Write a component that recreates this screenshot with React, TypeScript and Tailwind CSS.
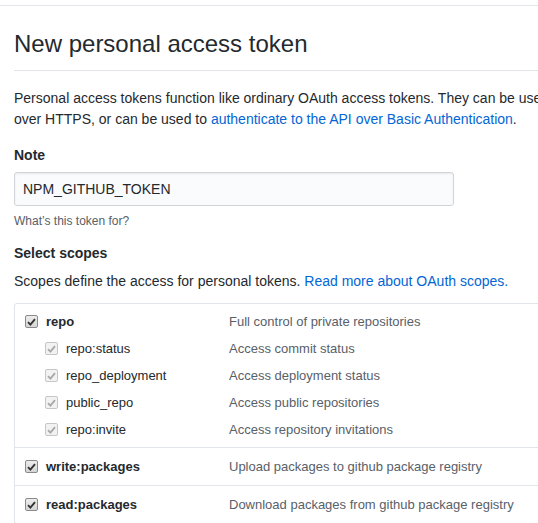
import React from "react";

interface ScopeRowProps {
  name: string;
  description: string;
  sub?: boolean;
}

const Check: React.FC<{ disabled?: boolean }> = ({ disabled }) => (
  <span
    className={`flex h-[13px] w-[13px] shrink-0 items-center justify-center rounded-[2px] border ${
      disabled
        ? "border-[#c6c6c6] bg-[#f2f2f2]"
        : "border-[#8a8a8a] bg-gradient-to-b from-[#ededed] to-[#d6d6d6]"
    }`}
  >
    <svg width="9" height="8" viewBox="0 0 9 8">
      <path
        d="M1 4.2 L3.4 6.6 L8 1.2"
        fill="none"
        stroke={disabled ? "#a9a9a9" : "#333333"}
        strokeWidth="1.9"
      />
    </svg>
  </span>
);

const ScopeRow: React.FC<ScopeRowProps> = ({ name, description, sub }) => (
  <div className="flex h-[27px] items-center">
    <div className={`flex w-[204px] shrink-0 items-center ${sub ? "pl-[20px]" : ""}`}>
      <Check disabled={sub} />
      <span
        className={`ml-[8px] text-[13px] text-[#24292e] ${sub ? "" : "font-bold"}`}
      >
        {name}
      </span>
    </div>
    <span className="text-[13px] text-[#586069]">{description}</span>
  </div>
);

const App: React.FC = () => {
  return (
    <div className="h-[523px] w-[538px] overflow-hidden bg-white font-['Liberation_Sans',Arial,sans-serif] text-[#24292e]">
      <div className="h-[6px] border-b border-[#e1e4e8]" />
      <div className="w-[1000px] pl-[14px]">
        <div className="mt-[23px] border-b border-[#e1e4e8] pb-[11px]">
          <h2 className="text-[24px] font-normal leading-[30px]">New personal access token</h2>
        </div>

        <p className="mt-[17px] whitespace-nowrap text-[14px] leading-[21px]">
          Personal access tokens function like ordinary OAuth access tokens. They can be used instead of a password for Git
          <br />
          over HTTPS, or can be used to{" "}
          <a className="text-[#0366d6]">authenticate to the API over Basic Authentication</a>.
        </p>

        <div className="mt-[15px] text-[14px] font-bold leading-[21px]">Note</div>
        <div className="mt-[6px] flex h-[34px] w-[440px] items-center rounded-[3px] border border-[#d1d5da] bg-[#fafbfc] px-[8px] text-[14px] shadow-[inset_0_1px_2px_rgba(27,31,35,0.075)]">
          NPM_GITHUB_TOKEN
        </div>
        <div className="mt-[6px] text-[12px] leading-[18px] text-[#586069]">What’s this token for?</div>

        <div className="mt-[13px] text-[14px] font-bold leading-[21px]">Select scopes</div>
        <p className="mt-[7px] text-[14px] leading-[21px]">
          Scopes define the access for personal tokens.{" "}
          <a className="text-[#0366d6]">Read more about OAuth scopes.</a>
        </p>

        <div className="mt-[11px] w-[760px] rounded-[3px] border border-[#e1e4e8]">
          <div className="pl-[10px] pt-[4px] pb-[4px]">
            <ScopeRow name="repo" description="Full control of private repositories" />
            <ScopeRow sub name="repo:status" description="Access commit status" />
            <ScopeRow sub name="repo_deployment" description="Access deployment status" />
            <ScopeRow sub name="public_repo" description="Access public repositories" />
            <ScopeRow sub name="repo:invite" description="Access repository invitations" />
          </div>
          <div className="flex h-[38px] items-center border-t border-[#e1e4e8] pl-[10px]">
            <ScopeRow name="write:packages" description="Upload packages to github package registry" />
          </div>
          <div className="flex h-[38px] items-center border-t border-[#e1e4e8] pl-[10px]">
            <ScopeRow name="read:packages" description="Download packages from github package registry" />
          </div>
        </div>
      </div>
    </div>
  );
};

export default App;
